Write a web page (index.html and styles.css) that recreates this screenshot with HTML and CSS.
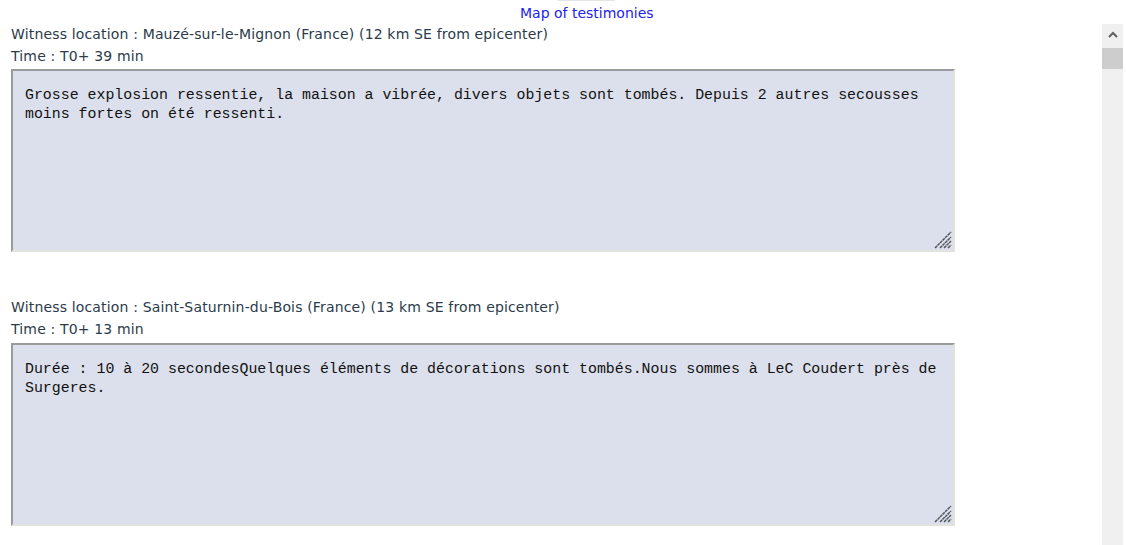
FILE: index.html
```html
<!DOCTYPE html>
<html lang="en">
<head>
<meta charset="utf-8">
<title>Testimonies</title>
<link rel="stylesheet" href="styles.css">
</head>
<body>
<div class="top">
  <span class="topmark"></span>
  <a class="maplink" href="#">Map of testimonies</a>
</div>
<div class="frame">
  <div class="list">
    <div class="entry">
      <div class="meta">Witness location : Mauzé-sur-le-Mignon (France) (12 km SE from epicenter)</div>
      <div class="meta">Time : T0+ 39 min</div>
      <div class="boxwrap">
        <textarea class="testimony" readonly>Grosse explosion ressentie, la maison a vibrée, divers objets sont tombés. Depuis 2 autres secousses moins fortes on été ressenti.</textarea>
        <svg class="grip" width="18" height="18" viewBox="0 0 18 18"><g stroke="#55565e" stroke-width="1.5" stroke-dasharray="3 0.6"><path d="M1 17 L17 1"/><path d="M6 17 L17 6"/><path d="M10 17 L17 10"/><path d="M14 17 L17 14"/></g></svg>
      </div>
    </div>
    <div class="entry">
      <div class="meta">Witness location : Saint-Saturnin-du-Bois (France) (13 km SE from epicenter)</div>
      <div class="meta">Time : T0+ 13 min</div>
      <div class="boxwrap boxwrap-low">
        <textarea class="testimony" readonly>Durée : 10 à 20 secondesQuelques éléments de décorations sont tombés.Nous sommes à LeC Coudert près de Surgeres.</textarea>
        <svg class="grip" width="18" height="18" viewBox="0 0 18 18"><g stroke="#55565e" stroke-width="1.5" stroke-dasharray="3 0.6"><path d="M1 17 L17 1"/><path d="M6 17 L17 6"/><path d="M10 17 L17 10"/><path d="M14 17 L17 14"/></g></svg>
      </div>
    </div>
  </div>
  <div class="scrollbar">
    <div class="arrow">
      <svg width="10" height="7" viewBox="0 0 10 7"><path d="M1 6 L5 2 L9 6" fill="none" stroke="#606060" stroke-width="2"/></svg>
    </div>
    <div class="thumb"></div>
  </div>
</div>
</body>
</html>
```
FILE: styles.css
```css
html, body {
  margin: 0;
  padding: 0;
  background: #ffffff;
  overflow: hidden;
}
body {
  width: 1126px;
  height: 545px;
  font-family: "DejaVu Sans", Verdana, sans-serif;
}
.top {
  position: relative;
  height: 23px;
  padding-top: 3px;
  box-sizing: border-box;
  padding-left: 520px;
}
.topmark {
  position: absolute;
  left: 558px;
  top: 0;
  width: 57px;
  height: 1px;
  background: #e4e4e4;
}
.maplink {
  font-size: 14px;
  line-height: 20px;
  color: #2121ee;
  text-decoration: none;
}
.frame {
  display: flex;
  height: 522px;
  overflow: hidden;
}
.list {
  flex: 1;
  padding-left: 11px;
}
.entry {
  margin-bottom: 44px;
}
.meta {
  font-size: 14px;
  letter-spacing: 0.16px;
  line-height: 22px;
  color: #2b3b4b;
  white-space: nowrap;
}
.boxwrap {
  position: relative;
  width: 944px;
  margin-top: 2px;
}
.boxwrap-low {
  margin-top: 3px;
}
.testimony {
  display: block;
  box-sizing: border-box;
  width: 944px;
  height: 183px;
  margin: 0;
  padding: 15px 12px 10px 12px;
  background: #dce0ec;
  border-style: solid;
  border-width: 2px;
  border-color: #9b9b9b #e4e2de #e4e2de #9b9b9b;
  font-family: "Liberation Mono", "DejaVu Sans Mono", monospace;
  font-size: 14.9px;
  line-height: 19px;
  color: #111111;
  resize: none;
  outline: none;
  overflow: hidden;
}
.grip {
  position: absolute;
  right: 3px;
  bottom: 3px;
}
.scrollbar {
  width: 21px;
  margin: 1px 3px 0 0;
  background: #f0f0f0;
  display: flex;
  flex-direction: column;
}
.arrow {
  height: 17px;
  display: flex;
  align-items: center;
  justify-content: center;
  padding-top: 2px;
}
.thumb {
  margin-top: 5px;
  height: 21px;
  background: #cdcdcd;
}
```
